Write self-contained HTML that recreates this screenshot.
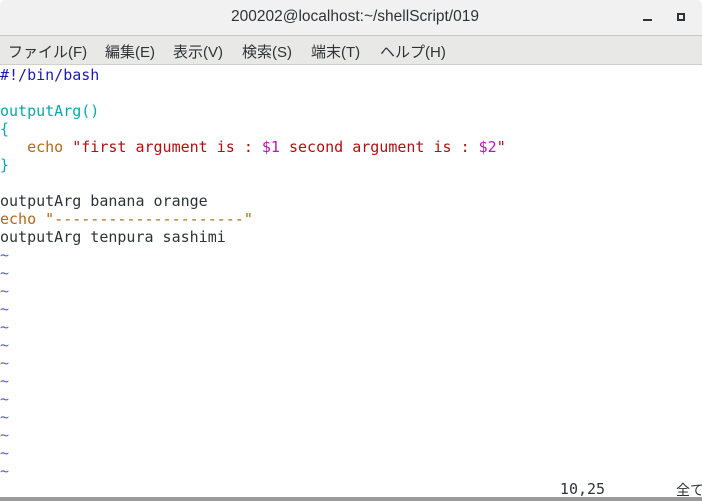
<!DOCTYPE html>
<html><head><meta charset="utf-8"><style>
body{margin:0;width:702px;height:501px;overflow:hidden;background:#fff;position:relative;font-family:"Liberation Sans","Noto Sans CJK JP",sans-serif}
#title{position:absolute;left:0;top:0;width:702px;height:35px;background:#f1f1f1;border-bottom:1px solid #c8c8c6;border-radius:5px 5px 0 0}
#title span{position:absolute;left:0;right:0;top:8px;text-align:center;font-size:15.5px;color:#2e3436;padding-left:8px}
#min{position:absolute;left:643px;top:19px;width:9px;height:2px;background:#2e3436}
#max{position:absolute;left:677px;top:13px;width:4px;height:4px;border:2px solid #2e3436}
#menu{position:absolute;left:0;top:36px;width:702px;height:28px;background:#e8e8e7;border-bottom:1px solid #cfcfcd}
#menu span{position:absolute;top:5px;font-size:15px;color:#2e3436}
pre{position:absolute;left:0;top:66px;margin:0;font-family:"DejaVu Sans Mono","Liberation Mono","Noto Sans CJK JP",monospace;font-size:15px;line-height:18px;color:#2e3436}
.b{color:#1c1caf}.c{color:#06a9a9}.o{color:#b26818}.r{color:#b01010}.m{color:#b618b6}.t{color:#5b5bea}
#st{position:absolute;left:676px;top:480px;font-family:"Noto Sans CJK JP",sans-serif;font-size:14px;color:#2e3436;white-space:nowrap}
#bot{position:absolute;left:0;top:497px;width:702px;height:4px;background:#9a9a9a}
</style></head><body>
<div id="title"><span>200202@localhost:~/shellScript/019</span><div id="min"></div><div id="max"></div></div>
<div id="menu"><span style="left:8px">ファイル(F)</span><span style="left:105px">編集(E)</span><span style="left:173px">表示(V)</span><span style="left:242px">検索(S)</span><span style="left:311px">端末(T)</span><span style="left:380px">ヘルプ(H)</span></div>
<pre><span class="b">#!/bin/bash</span>

<span class="c">outputArg()</span>
<span class="c">{</span>
   <span class="o">echo</span> <span class="r">"first argument is : </span><span class="m">$1</span><span class="r"> second argument is : </span><span class="m">$2</span><span class="r">"</span>
<span class="c">}</span>

outputArg banana orange
<span class="o">echo "---------------------"</span>
outputArg tenpura sashimi
<span class="t">~
~
~
~
~
~
~
~
~
~
~
~
~</span>
                                                              10,25</pre>
<div id="st">全て</div>
<div id="bot"></div>
</body></html>
